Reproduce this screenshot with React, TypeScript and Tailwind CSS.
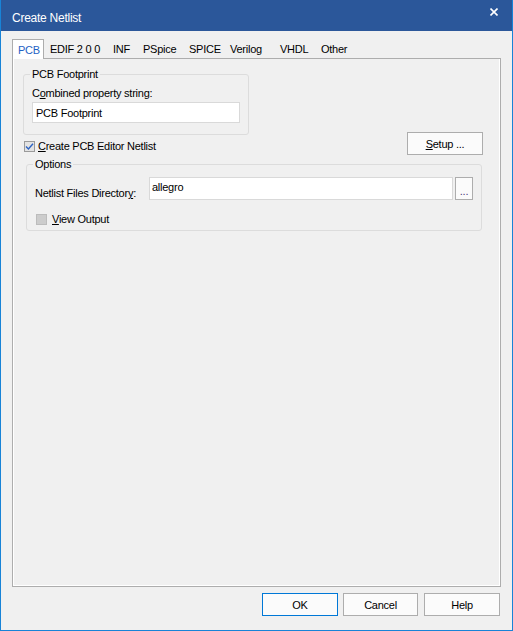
import { ReactNode } from "react";

const tabs = [
  { label: "PCB", w: "w-[32px]" },
  { label: "EDIF 2 0 0", w: "w-[63px]" },
  { label: "INF", w: "w-[30px]" },
  { label: "PSpice", w: "w-[46px]" },
  { label: "SPICE", w: "w-[41px]" },
  { label: "Verilog", w: "w-[50px]" },
  { label: "VHDL", w: "w-[41px]" },
  { label: "Other", w: "w-[40px]" },
];

function GroupBox({ legend, className, children }: { legend: string; className: string; children: ReactNode }) {
  return (
    <div className={`relative rounded-[3px] border border-[#dcdcdc] ${className}`}>
      <span className="absolute -top-[9px] left-[6px] bg-[#f0f0f0] px-[2px] leading-[16px]">{legend}</span>
      {children}
    </div>
  );
}

function CheckBox({ checked }: { checked?: boolean }) {
  return (
    <span
      className={`flex h-[11px] w-[11px] shrink-0 items-center justify-center border ${
        checked ? "border-[#9a9a9a] bg-[#e3e3e3]" : "border-[#bcbcbc] bg-[#cccccc]"
      }`}
    >
      {checked ? (
        <svg width="9" height="9" viewBox="0 0 9 9">
          <path d="M1 4.6 L3.4 7 L8 1.8" fill="none" stroke="#2c63c4" strokeWidth="1.4" />
        </svg>
      ) : null}
    </span>
  );
}

function Button({ children, primary, className = "" }: { children: ReactNode; primary?: boolean; className?: string }) {
  return (
    <button
      className={`flex h-[23px] items-center justify-center border bg-[#fbfbfb] leading-[16px] ${
        primary ? "border-[#0078d7]" : "border-[#adadad]"
      } ${className}`}
    >
      {children}
    </button>
  );
}

export default function App() {
  return (
    <div className="flex h-[631px] w-[513px] flex-col border-x border-b border-[#1883d7] bg-[#f0f0f0] font-['Segoe_UI','Liberation_Sans',sans-serif] text-[11px] tracking-[-0.25px] text-black">
      {/* title bar */}
      <div className="flex h-[31px] shrink-0 items-start justify-between bg-[#2b579a] pl-[11px] pr-[14px] text-white">
        <span className="mt-[10px] text-[12px] leading-[16px]">Create Netlist</span>
        <svg className="mt-[8px]" width="8" height="8" viewBox="0 0 8 8">
          <path d="M0.5 0.5 L7.5 7.5 M7.5 0.5 L0.5 7.5" stroke="#fff" strokeWidth="1.6" />
        </svg>
      </div>

      <div className="flex flex-1 flex-col px-[11px]">
        {/* tab strip */}
        <div className="relative z-10 mt-[8px] flex h-[19px] items-start">
          {tabs.map((t, i) =>
            i === 0 ? (
              <div
                key={t.label}
                className={`flex h-[20px] ${t.w} items-center border-x border-t border-[#adadad] bg-white pl-[5px] leading-[16px] text-[#1f62c4]`}
              >
                {t.label}
              </div>
            ) : (
              <div key={t.label} className={`flex h-[20px] ${t.w} items-center pl-[6px] leading-[16px]`}>
                {t.label}
              </div>
            )
          )}
        </div>

        {/* tab page */}
        <div className="h-[529px] border border-[#adadad] pl-[10px] pt-[15px] shadow-[inset_1px_0_0_#fff,inset_-1px_0_0_#fff,inset_0_-1px_0_#fff]">
          <div className="flex items-start">
            <div className="flex flex-col">
              <GroupBox legend="PCB Footprint" className="h-[61px] w-[226px] pl-[8px] pt-[10px]">
                <div className="leading-[16px]">
                  C<span className="underline">o</span>mbined property string:
                </div>
                <div className="mt-[1px] flex h-[21px] w-[208px] items-center border border-[#d9d9d9] bg-white pl-[3px] leading-[16px]">
                  PCB Footprint
                </div>
              </GroupBox>
              <div className="ml-[1px] mt-[3px] flex h-[16px] items-center gap-[3px] leading-[16px]">
                <CheckBox checked />
                <span>
                  <span className="underline">C</span>reate PCB Editor Netlist
                </span>
              </div>
            </div>
            <Button className="ml-auto mr-[17px] mt-[58px] w-[76px]">
              <span>
                <span className="underline">S</span>etup ...
              </span>
            </Button>
          </div>

          <GroupBox legend="Options" className="ml-[3px] mt-[9px] h-[67px] w-[456px] pl-[8px] pt-[12px]">
            <div className="flex items-start">
              <span className="mt-[8px] w-[114px] leading-[16px]">
                Netlist Files Director<span className="underline">y</span>:
              </span>
              <div className="h-[23px] w-[304px] border border-[#d9d9d9] bg-white pl-[2px] pt-[1px] leading-[16px]">
                allegro
              </div>
              <Button className="ml-[2px] w-[18px] pt-[4px] text-[#4a3a7a]">...</Button>
            </div>
            <div className="ml-[1px] mt-[10px] flex h-[16px] items-center gap-[5px] leading-[16px]">
              <CheckBox />
              <span>
                <span className="underline">V</span>iew Output
              </span>
            </div>
          </GroupBox>
        </div>

        {/* dialog buttons */}
        <div className="mr-[1px] mt-[6px] flex justify-end">
          <Button primary className="w-[76px]">OK</Button>
          <Button className="ml-[5px] w-[75px]">Cancel</Button>
          <Button className="ml-[6px] w-[76px]">Help</Button>
        </div>
      </div>
    </div>
  );
}
